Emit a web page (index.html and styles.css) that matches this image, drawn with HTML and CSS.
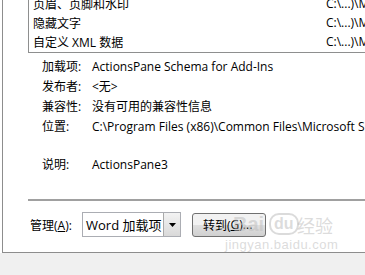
FILE: index.html
```html
<!DOCTYPE html>
<html lang="zh-CN">
<head>
<meta charset="utf-8">
<link rel="stylesheet" href="styles.css">
</head>
<body>
<div class="page">
  <div class="frame">
    <div class="list">
      <div class="row"><span class="name">页眉、页脚和水印</span><span class="loc">C:\...)\Mic</span></div>
      <div class="row"><span class="name">隐藏文字</span><span class="loc">C:\...)\Mic</span></div>
      <div class="row"><span class="name">自定义 XML 数据</span><span class="loc">C:\...)\Mic</span></div>
    </div>
    <div class="details">
      <div class="drow"><span class="lab">加载项:</span><span class="val">ActionsPane Schema for Add-Ins</span></div>
      <div class="drow"><span class="lab">发布者:</span><span class="val">&lt;无&gt;</span></div>
      <div class="drow"><span class="lab">兼容性:</span><span class="val">没有可用的兼容性信息</span></div>
      <div class="drow"><span class="lab">位置:</span><span class="val">C:\Program Files (x86)\Common Files\Microsoft Shared\VSTO</span></div>
      <div class="drow desc"><span class="lab">说明:</span><span class="val">ActionsPane3</span></div>
    </div>
    <div class="sep"></div>
    <div class="manage">
      <span class="mlab">管理(<u>A</u>):</span>
      <div class="select"><span class="sel-text">Word 加载项</span><span class="sel-btn"><svg width="7" height="4" viewBox="0 0 7 4"><path d="M0 0h7L3.5 4z" fill="#000"/></svg></span></div>
      <div class="go">转到(<u>G</u>)...</div>
    </div>
    <div class="watermark">
      <span class="wm-bai">Bai</span><span class="wm-du">du</span><span class="wm-jy">经验</span>
      <span class="wm-url">jingyan.baidu.com</span>
    </div>
  </div>
  <div class="strip"></div>
</div>
</body>
</html>
```
FILE: styles.css
```css
* { box-sizing: border-box; }
html, body { margin: 0; padding: 0; }
body {
  width: 365px;
  height: 275px;
  overflow: hidden;
  background: #fff;
  font-family: "Open Sans", "Noto Sans CJK SC", sans-serif;
  font-size: 12px;
  color: #000;
}
.page {
  display: flex;
  flex-direction: column;
  height: 275px;
}
.frame {
  position: relative;
  margin-left: 2px;
  height: 253px;
  border-left: 1px solid #8d8d8d;
  border-bottom: 1px solid #8d8d8d;
  background: #fff;
  overflow: hidden;
}
.list {
  margin-left: 25px;
  margin-top: -7px;
  width: 400px;
  border: 1px solid #8e8f8f;
  padding-bottom: 1px;
}
.row {
  display: flex;
  height: 19px;
  align-items: center;
  padding-left: 4px;
  white-space: nowrap;
}
.row .name { width: 293px; }
.details {
  margin-top: 3px;
  padding-left: 39px;
}
.drow {
  display: flex;
  height: 20px;
  align-items: center;
  white-space: nowrap;
}
.drow .lab { width: 50px; flex: none; }
.drow.desc { margin-top: 18px; }
.sep {
  margin-top: 25px;
  margin-left: 25px;
  height: 2px;
  background: #a0a0a0;
}
.manage {
  display: flex;
  align-items: center;
  margin-top: 11px;
  padding-left: 27px;
  white-space: nowrap;
}
.mlab { width: 52px; }
.select {
  display: flex;
  width: 99px;
  height: 25px;
  border: 1px solid #abadb3;
  align-items: stretch;
}
.sel-text {
  flex: 1;
  padding-left: 3px;
  display: flex;
  align-items: center;
  font-size: 13px;
}
.sel-btn {
  width: 17px;
  display: flex;
  align-items: center;
  justify-content: center;
  border-left: 1px solid #a9a9a9;
  background: linear-gradient(#f3f3f3, #d9d9d9);
}
.go {
  margin-left: 11px;
  width: 74px;
  height: 24px;
  border: 1px solid #707070;
  border-radius: 3px;
  background: linear-gradient(#f2f2f2 50%, #e0e0e0 50%, #d0d0d0);
  display: flex;
  align-items: center;
  padding-left: 10px;
}
.watermark {
  position: absolute;
  left: 222px;
  top: 204px;
  width: 130px;
  height: 50px;
  color: rgba(190,190,190,0.55);
  pointer-events: none;
  font-family: "Liberation Sans", sans-serif;
}
.wm-bai { position: absolute; left: 8px; top: 9px; font-size: 20px; font-weight: bold; }
.wm-du { position: absolute; left: 44px; top: 9px; font-size: 16px; font-weight: bold; border: 2px solid rgba(190,190,190,0.55); border-radius: 10px; padding: 0 3px; line-height: 18px; }
.wm-jy { position: absolute; left: 72px; top: 10px; font-size: 18px; font-family: "Noto Sans CJK SC", sans-serif; line-height: 22px; }
.wm-url { position: absolute; left: 0; top: 33px; font-size: 13px; letter-spacing: 0.5px; }
.strip {
  flex: 1;
  background: #f0f0f0;
}
```
